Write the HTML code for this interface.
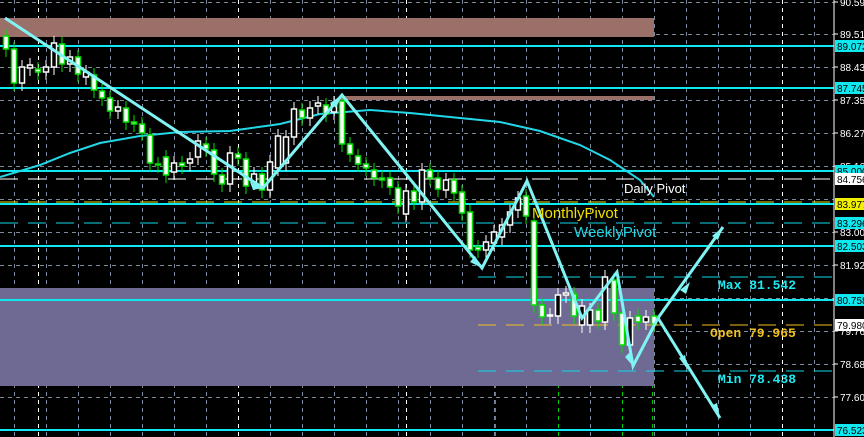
<!DOCTYPE html>
<html><head><meta charset="utf-8"><style>
html,body{margin:0;padding:0;background:#000;width:864px;height:437px;overflow:hidden}
svg{display:block}
text{font-family:"Liberation Sans",sans-serif}
</style></head><body>
<svg id="c" width="864" height="437" viewBox="0 0 864 437" xmlns="http://www.w3.org/2000/svg">
<rect width="864" height="437" fill="#000"/>
<g id="grid"></g>
<rect x="0" y="18" width="654" height="19" fill="#9a7068"/>
<rect x="340" y="96" width="314" height="4" fill="#9a7068"/>
<rect x="0" y="288" width="654" height="98" fill="#6e6a93"/>
<g id="lines"></g>
<polyline fill="none" stroke="#22d8e8" stroke-width="2" points="0,177 40,165 70,153 100,143 140,136 180,132 230,131 280,124 320,114 370,110 410,113 460,118 500,122 540,131 580,145 610,160 640,180 654,197"/>
<g id="candles"></g>
<g fill="none" stroke="#80f4f4" stroke-width="3" stroke-linejoin="miter">
<polyline points="5,18 263,188 342,95 482,268 527,181 582,318 617,272 633,366 658,318"/>
<polyline points="658,318 723,227"/>
<polyline points="658,318 720,418"/>
</g>
<g fill="#80f4f4">
<polygon points="723,227 712,236 718,240"/>
<polygon points="690,282 680,290 686,294"/>
<polygon points="720,418 711,406 717,403"/>
<polygon points="688,370 679,358 685,355"/>
<polygon points="342,95 330,103 336,108"/>
<polygon points="263,188 250,182 253,190"/>
<polygon points="482,268 475,256 470,262"/>
<polygon points="633,366 630,352 625,357"/>
</g>
<text x="624" y="193" font-size="13" fill="#fff">Daily Pivot</text>
<text x="532" y="218" font-size="15" fill="#f0e000">MonthlyPivot</text>
<text x="574" y="237" font-size="15" fill="#20d8e8">WeeklyPivot</text>
<g font-family="Liberation Mono,monospace" font-weight="bold" font-size="13">
<text x="718" y="289" fill="#20e8f0" style="font-family:'Liberation Mono',monospace">Max 81.542</text>
<text x="710" y="337" fill="#f0c020" style="font-family:'Liberation Mono',monospace">Open 79.965</text>
<text x="718" y="383" fill="#20e8f0" style="font-family:'Liberation Mono',monospace">Min 78.438</text>
</g>
<line x1="834" y1="0" x2="834" y2="437" stroke="#fff" stroke-width="1"/>
<g id="axis" font-size="10"></g>
</svg>
<script>
var NS="http://www.w3.org/2000/svg";
function el(p,t,a,txt){var e=document.createElementNS(NS,t);for(var k in a)e.setAttribute(k,a[k]);if(txt)e.textContent=txt;document.getElementById(p).appendChild(e);return e;}
// grid
[2,34,67,100,133,166,199,232,265,298,331,364,397,430].forEach(function(y){el('grid','line',{x1:0,x2:834,y1:y+.5,y2:y+.5,stroke:'#7a8a9a','stroke-dasharray':'4,4'});});
for(var x=14;x<834;x+=32){el('grid','line',{x1:x+.5,x2:x+.5,y1:0,y2:437,stroke:'#7a8a9a','stroke-dasharray':'4,4'});}
[38,238,406,782].forEach(function(x){el('grid','line',{x1:x+.5,x2:x+.5,y1:0,y2:437,stroke:'#fff','stroke-dasharray':'4,4'});});
[495,558,622,652].forEach(function(x){el('grid','line',{x1:x+.5,x2:x+.5,y1:288,y2:437,stroke:'#0c0','stroke-dasharray':'4,4'});});
// level lines
[46,88,171,204,246,300,430].forEach(function(y){el('lines','line',{x1:0,x2:834,y1:y,y2:y,stroke:'#10e8f0','stroke-width':2});});
el('lines','line',{x1:0,x2:834,y1:179,y2:179,stroke:'#fff','stroke-dasharray':'18,10'});
el('lines','line',{x1:0,x2:834,y1:202,y2:202,stroke:'#f0e000','stroke-dasharray':'18,10'});
el('lines','line',{x1:0,x2:834,y1:223,y2:223,stroke:'#10d8e8','stroke-dasharray':'18,10'});
el('lines','line',{x1:478,x2:834,y1:277,y2:277,stroke:'#10d8e8','stroke-dasharray':'18,10'});
el('lines','line',{x1:478,x2:834,y1:325,y2:325,stroke:'#f0c020','stroke-dasharray':'18,10'});
el('lines','line',{x1:478,x2:834,y1:371,y2:371,stroke:'#10d8e8','stroke-dasharray':'18,10'});
// candles [x,top,bottom,type]
var C=[[6,36,49,'g'],[14,49,83,'g'],[22,67,83,'h'],[30,65,68,'h'],[38,69,72,'g'],[46,67,72,'h'],[54,43,67,'h'],[62,44,64,'g'],[70,57,64,'h'],[78,57,74,'g'],[86,72,77,'h'],[94,75,90,'g'],[102,91,98,'g'],[110,98,111,'g'],[118,107,111,'h'],[126,108,122,'g'],[134,122,124,'g'],[142,124,133,'g'],[150,135,163,'g'],[158,164,165,'g'],[166,157,175,'g'],[174,163,172,'h'],[182,163,166,'g'],[190,159,163,'h'],[198,141,157,'h'],[206,144,149,'g'],[214,150,174,'g'],[222,175,184,'g'],[230,153,184,'h'],[238,154,158,'g'],[246,159,186,'g'],[254,174,182,'h'],[262,174,190,'g'],[270,162,190,'h'],[278,136,168,'h'],[286,137,163,'h'],[294,109,137,'h'],[302,110,118,'g'],[310,108,118,'h'],[318,103,106,'h'],[326,105,114,'g'],[334,103,112,'h'],[342,101,144,'g'],[350,144,154,'g'],[358,156,164,'g'],[366,164,168,'g'],[374,170,178,'g'],[382,178,180,'g'],[390,178,187,'g'],[398,188,206,'g'],[406,191,214,'h'],[414,191,202,'g'],[422,170,202,'h'],[430,170,178,'g'],[438,178,189,'g'],[446,180,190,'h'],[454,180,193,'g'],[462,192,213,'g'],[470,212,250,'g'],[478,247,250,'g'],[486,242,250,'h'],[494,232,243,'h'],[502,225,237,'h'],[510,212,225,'h'],[518,198,210,'h'],[526,196,216,'g'],[534,221,305,'g'],[542,305,317,'g'],[550,315,316,'h'],[558,295,316,'h'],[566,293,295,'h'],[574,294,316,'g'],[582,306,325,'h'],[590,310,325,'h'],[598,310,321,'g'],[605,277,322,'h'],[614,280,313,'g'],[622,313,345,'g'],[630,318,345,'h'],[638,316,322,'g'],[646,317,322,'h'],[654,316,324,'g']];
C.forEach(function(c){var x=c[0],t=c[1],b=c[2],g=c[3]=='g';
el('candles','line',{x1:x,x2:x,y1:t-7,y2:b+8,stroke:g?'#00e000':'#fff'});
el('candles','rect',{x:x-2.5,y:t,width:5,height:Math.max(1,b-t),fill:g?'#fff':'#000',stroke:g?'#00e000':'#fff','stroke-width':1.5});});
// axis
[[2,'90.590'],[34,'89.510'],[67,'88.430'],[100,'87.350'],[133,'86.270'],[166,'85.160'],[232,'83.000'],[265,'81.920'],[331,'79.760'],[364,'78.680'],[397,'77.600']].forEach(function(a){
el('axis','line',{x1:834,x2:838,y1:a[0],y2:a[0],stroke:'#fff'});
el('axis','text',{x:840,y:a[0]+4,fill:'#fff'},a[1]);});
[[46,'89.073','#10e8f0'],[88,'87.745','#10e8f0'],[171,'85.000','#10e8f0'],[179,'84.756','#fff'],[204,'83.977','#f0f000'],[223,'83.296','#10e8f0'],[246,'82.503','#10e8f0'],[300,'80.758','#10e8f0'],[325,'79.980','#fff'],[430,'76.523','#10e8f0']].forEach(function(a){
el('axis','rect',{x:835,y:a[0]-6,width:29,height:12,fill:a[2]});
el('axis','text',{x:837,y:a[0]+4,fill:'#000'},a[1]);});
</script>
</body></html>
